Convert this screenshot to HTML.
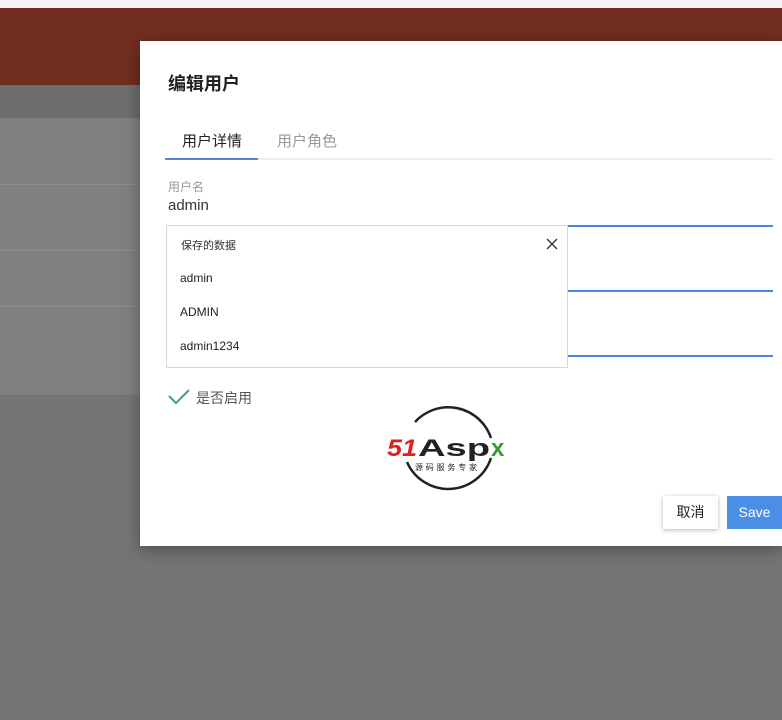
<!DOCTYPE html>
<html><head><meta charset="utf-8"><style>
*{margin:0;padding:0;box-sizing:border-box}
body{width:782px;height:720px;overflow:hidden;position:relative;background:#757575;font-family:"Liberation Sans","Noto Sans CJK SC",sans-serif}
.a{position:absolute}
</style></head><body>
<div class="a" style="left:0;top:0;width:782px;height:8px;background:#f4f4f4"></div>
<div class="a" style="left:0;top:8px;width:782px;height:77px;background:#722d21"></div>
<div class="a" style="left:0;top:85px;width:782px;height:33px;background:#6e6e6e"></div>
<div class="a" style="left:0;top:118px;width:782px;height:277px;background:#808080"></div>
<div class="a" style="left:0;top:184px;width:140px;height:1px;background:#8c8c8c"></div>
<div class="a" style="left:0;top:250px;width:140px;height:1px;background:#8c8c8c"></div>
<div class="a" style="left:0;top:306px;width:140px;height:1px;background:#8c8c8c"></div>
<div class="a" style="left:140px;top:41px;width:642px;height:505px;background:#fff;box-shadow:0 4px 16px rgba(0,0,0,.35)"></div>
<div class="a" style="left:168px;top:70px;font-size:18px;font-weight:bold;color:#222">编辑用户</div>
<div class="a" style="left:182px;top:130px;font-size:15px;color:#222">用户详情</div>
<div class="a" style="left:277px;top:130px;font-size:15px;color:#999">用户角色</div>
<div class="a" style="left:165px;top:158px;width:608px;height:2px;background:#eee"></div>
<div class="a" style="left:165px;top:158px;width:93px;height:2px;background:#5b85c8"></div>
<div class="a" style="left:168px;top:178px;font-size:12px;color:#999">用户名</div>
<div class="a" style="left:168px;top:197px;font-size:15px;color:#333">admin</div>
<div class="a" style="left:168px;top:225px;width:605px;height:2px;background:#4a86e0"></div>
<div class="a" style="left:168px;top:290px;width:605px;height:2px;background:#4a86e0"></div>
<div class="a" style="left:168px;top:355px;width:605px;height:2px;background:#4a86e0"></div>
<div class="a" style="left:166px;top:225px;width:402px;height:143px;background:#fff;border:1px solid #d6d6d6"></div>
<div class="a" style="left:181px;top:237px;font-size:11px;color:#333">保存的数据</div>
<svg class="a" style="left:546px;top:238px" width="12" height="12"><path d="M1 1L11 11M11 1L1 11" stroke="#333" stroke-width="1.3"/></svg>
<div class="a" style="left:180px;top:271px;font-size:12px;color:#222">admin</div>
<div class="a" style="left:180px;top:305px;font-size:12px;color:#222">ADMIN</div>
<div class="a" style="left:180px;top:339px;font-size:12px;color:#222">admin1234</div>
<svg class="a" style="left:167px;top:387px" width="24" height="20"><path d="M2 9 L9 16 L22 3" stroke="#4a9a8a" stroke-width="2" fill="none"/></svg>
<div class="a" style="left:196px;top:388px;font-size:14px;color:#555">是否启用</div>
<svg class="a" style="left:385px;top:400px" width="130" height="96">
<path d="M30 22 A45 45 0 0 1 106 38" stroke="#222" stroke-width="2.5" fill="none"/>
<path d="M106 58 A45 45 0 0 1 22 62" stroke="#222" stroke-width="2.5" fill="none"/>
<text x="2" y="56" font-family="Liberation Sans" font-weight="bold" font-style="italic" font-size="24" fill="#e02020" textLength="30" lengthAdjust="spacingAndGlyphs">51</text>
<text x="33" y="56" font-family="Liberation Sans" font-weight="bold" font-size="24" fill="#222" textLength="72" lengthAdjust="spacingAndGlyphs">Asp</text>
<text x="106" y="56" font-family="Liberation Sans" font-weight="bold" font-size="24" fill="#3a9a3a">x</text>
<text x="30" y="70" font-family="Noto Sans CJK SC" font-size="8" fill="#222" textLength="62">源码服务专家</text>
</svg>
<div class="a" style="left:663px;top:496px;width:55px;height:33px;background:#fff;box-shadow:0 1px 4px rgba(0,0,0,.3);font-size:14px;color:#222;text-align:center;line-height:33px">取消</div>
<div class="a" style="left:727px;top:496px;width:55px;height:33px;background:#4a8ee6;font-size:14px;color:#fff;text-align:center;line-height:33px">Save</div>
</body></html>
